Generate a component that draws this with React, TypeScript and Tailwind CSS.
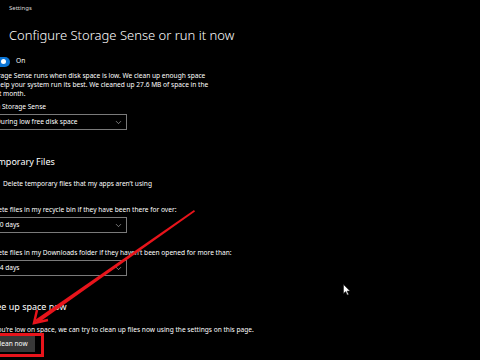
import { ChevronDown } from 'lucide-react';

function Dropdown({ label }: { label: string }) {
  return (
    <div className="mt-[3px] flex h-[16px] w-[139px] items-center justify-between border border-[#7a7a7a] pl-[7px] pr-[3px]">
      <span className="text-[6.6px] leading-none text-white">{label}</span>
      <ChevronDown size={9} strokeWidth={1.5} className="text-[#cfcfcf]" />
    </div>
  );
}

export default function App() {
  return (
    <div
      className="relative h-[360px] w-[480px] overflow-hidden bg-black text-white"
      style={{ fontFamily: '"Segoe UI", "Noto Sans", "Open Sans", sans-serif' }}
    >
      {/* Window title */}
      <div className="pl-[9px] pt-[3px] text-[6px] leading-[10px] text-[#d8d8d8]">Settings</div>

      {/* Page content, scrolled a bit to the left */}
      <div className="ml-[-12px] flex flex-col items-start">
        <h1 className="ml-[21px] mt-[12px] text-[13px] font-light leading-[20px] text-white">
          Configure Storage Sense or run it now
        </h1>

        {/* Toggle */}
        <div className="mt-[11px] flex h-[11px] items-center gap-[6px]">
          <div className="flex h-[10px] w-[22px] items-center justify-end rounded-full bg-[#0a74d4] pr-[4px]">
            <div className="h-[5px] w-[5px] rounded-full bg-white" />
          </div>
          <span className="text-[6.6px] leading-none">On</span>
        </div>

        <p className="mt-[4px] w-[222px] text-[6.6px] leading-[9px] text-white">
          Storage Sense runs when disk space is low. We clean up enough space to help your system run its best. We cleaned up 27.6 MB of space in the past month.
        </p>

        <div className="mt-[4px] text-[6.6px] leading-[9px]">Run Storage Sense</div>
        <Dropdown label="During low free disk space" />

        <h2 className="mt-[25px] text-[9px] leading-[14px] text-white">Temporary Files</h2>

        <div className="mt-[10px] flex h-[11px] items-center gap-[5px]">
          <div className="h-[10px] w-[10px] border border-[#cfcfcf]" />
          <span className="text-[6.6px] leading-none">Delete temporary files that my apps aren’t using</span>
        </div>

        <div className="mt-[15px] text-[6.6px] leading-[9px]">
          Delete files in my recycle bin if they have been there for over:
        </div>
        <Dropdown label="30 days" />

        <div className="mt-[15px] text-[6.6px] leading-[9px]">
          Delete files in my Downloads folder if they haven’t been opened for more than:
        </div>
        <Dropdown label="14 days" />

        <h2 className="mt-[24px] text-[9px] leading-[14px] text-white">Free up space now</h2>
        <div className="mt-[11px] text-[6.6px] leading-[9px]">
          If you’re low on space, we can try to clean up files now using the settings on this page.
        </div>
        <button className="mt-[2px] flex h-[16px] w-[47px] items-center justify-center bg-[#383838] text-[6.6px] leading-none text-white">
          Clean now
        </button>
      </div>

      {/* Red annotation box around the button */}
      <div className="absolute left-[-6px] top-[333px] h-[24px] w-[50px] border-[3px] border-[#e8141b]" />

      {/* Red annotation arrow */}
      <svg className="pointer-events-none absolute left-0 top-0" width="480" height="360" viewBox="0 0 480 360">
        <polygon points="194,210 195,211.5 38,323 35,320" fill="#e8141b" />
        <polyline points="37,310 34,323 48,320" fill="none" stroke="#e8141b" strokeWidth="2.5" strokeLinejoin="miter" />
      </svg>

      {/* Mouse cursor */}
      <svg className="pointer-events-none absolute left-[343px] top-[284px]" width="8" height="12" viewBox="0 0 8 12">
        <path d="M0.5 0.5 L0.5 9.5 L2.7 7.6 L4.2 11 L5.6 10.4 L4.1 7.1 L7 7.1 Z" fill="#ffffff" stroke="#222" strokeWidth="0.6" />
      </svg>
    </div>
  );
}
